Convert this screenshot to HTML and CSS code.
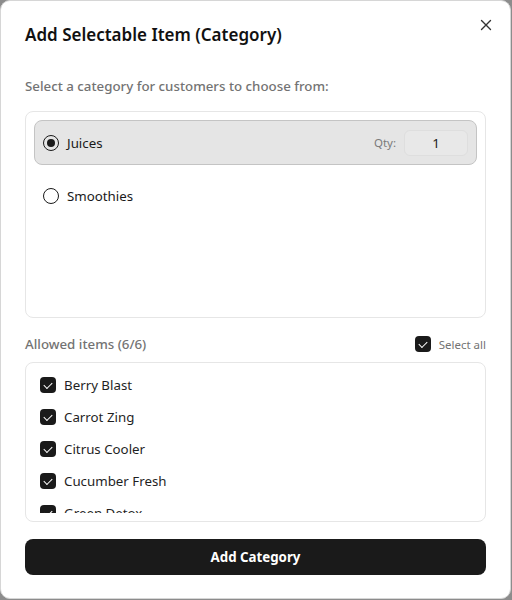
FILE: index.html
```html
<!DOCTYPE html>
<html lang="en">
<head>
    <meta charset="UTF-8">
    <meta name="viewport" content="width=device-width, initial-scale=1.0">
    <title>Add Selectable Item</title>
    <link rel="stylesheet" href="styles.css">
</head>
<body>
    <div class="dialog">
        <button type="button" class="close" aria-label="Close">
            <svg width="12" height="12" viewBox="0 0 12 12"><path d="M1.5 1.5L10.5 10.5M10.5 1.5L1.5 10.5" stroke="#333" stroke-width="1.4" stroke-linecap="round"/></svg>
        </button>
        <h1 class="title">Add Selectable Item (Category)</h1>
        <p class="hint">Select a category for customers to choose from:</p>

        <div class="categories">
            <div class="category selected">
                <span class="radio checked"></span>
                <span class="cat-name">Juices</span>
                <span class="qty-label">Qty:</span>
                <span class="qty-input">1</span>
            </div>
            <div class="category">
                <span class="radio"></span>
                <span class="cat-name">Smoothies</span>
            </div>
        </div>

        <div class="allowed-head">
            <span class="allowed-title">Allowed items (6/6)</span>
            <label class="select-all"><span class="check"></span>Select all</label>
        </div>

        <div class="items">
            <div class="items-scroll">
                <div class="item"><span class="check"></span>Berry Blast</div>
                <div class="item"><span class="check"></span>Carrot Zing</div>
                <div class="item"><span class="check"></span>Citrus Cooler</div>
                <div class="item"><span class="check"></span>Cucumber Fresh</div>
                <div class="item"><span class="check"></span>Green Detox</div>
                <div class="item"><span class="check"></span>Mango Sunrise</div>
            </div>
        </div>

        <button type="button" class="btn">Add Category</button>
    </div>
</body>
</html>
```

FILE: styles.css
```css
* {
    box-sizing: border-box;
}
body {
    margin: 0;
    background: #8c8c8c;
    font-family: "Noto Sans", "Open Sans", sans-serif;
    color: #1a1a1a;
}
.dialog {
    position: relative;
    width: 511px;
    height: 599px;
    background: #fff;
    border: 1px solid #d6d6d6;
    border-radius: 10px;
    padding: 22px 24px 0;
}
.close {
    position: absolute;
    top: 18px;
    right: 18px;
    border: none;
    background: none;
    padding: 0;
    width: 12px;
    height: 12px;
    display: flex;
}
.title {
    margin: 0;
    font-size: 17px;
    font-weight: 600;
    line-height: 24px;
    color: #111;
}
.hint {
    margin: 29px 0 0;
    font-size: 13.3px;
    font-weight: 500;
    line-height: 20px;
    color: #737373;
}
.categories {
    margin-top: 15px;
    height: 207px;
    border: 1px solid #e6e6e6;
    border-radius: 8px;
    padding: 8px;
    display: flex;
    flex-direction: column;
    gap: 8px;
}
.category {
    height: 45px;
    flex-shrink: 0;
    display: flex;
    align-items: center;
    padding: 0 8px;
    border: 1px solid transparent;
    border-radius: 8px;
    font-size: 13.3px;
}
.category.selected {
    background: #e5e5e5;
    border-color: #c4c4c4;
}
.radio {
    width: 16px;
    height: 16px;
    border: 1.5px solid #1a1a1a;
    border-radius: 50%;
    margin-right: 8px;
    display: flex;
    align-items: center;
    justify-content: center;
}
.radio.checked::after {
    content: "";
    width: 8px;
    height: 8px;
    border-radius: 50%;
    background: #1a1a1a;
}
.cat-name {
    flex: 1;
}
.qty-label {
    font-size: 11.5px;
    color: #7a7a7a;
    margin-right: 8px;
}
.qty-input {
    width: 64px;
    height: 26px;
    border: 1px solid #dedede;
    border-radius: 6px;
    background: #e8e8e8;
    text-align: center;
    line-height: 24px;
    font-size: 13.3px;
}
.allowed-head {
    margin-top: 16px;
    display: flex;
    align-items: center;
    justify-content: space-between;
    height: 20px;
}
.allowed-title {
    font-size: 13.3px;
    font-weight: 500;
    color: #737373;
}
.select-all {
    display: flex;
    align-items: center;
    font-size: 11.5px;
    color: #737373;
}
.check {
    width: 16px;
    height: 16px;
    border-radius: 4px;
    background: #1a1a1a;
    margin-right: 8px;
    display: inline-flex;
    align-items: center;
    justify-content: center;
    flex-shrink: 0;
}
.check::after {
    content: "";
    width: 7px;
    height: 4px;
    border-left: 1.6px solid #fff;
    border-bottom: 1.6px solid #fff;
    transform: translateY(-1px) rotate(-45deg);
}
.items {
    margin-top: 8px;
    height: 160px;
    border: 1px solid #e6e6e6;
    border-radius: 8px;
    padding: 6px 14px 8px;
}
.items-scroll {
    height: 100%;
    overflow: hidden;
}
.item {
    height: 32px;
    display: flex;
    align-items: center;
    font-size: 13.3px;
    color: #1f1f1f;
}
.btn {
    display: block;
    width: 100%;
    height: 36px;
    margin-top: 17px;
    border: none;
    border-radius: 8px;
    background: #1a1a1a;
    color: #fff;
    font-family: inherit;
    font-size: 13.3px;
    font-weight: 700;
}
```
